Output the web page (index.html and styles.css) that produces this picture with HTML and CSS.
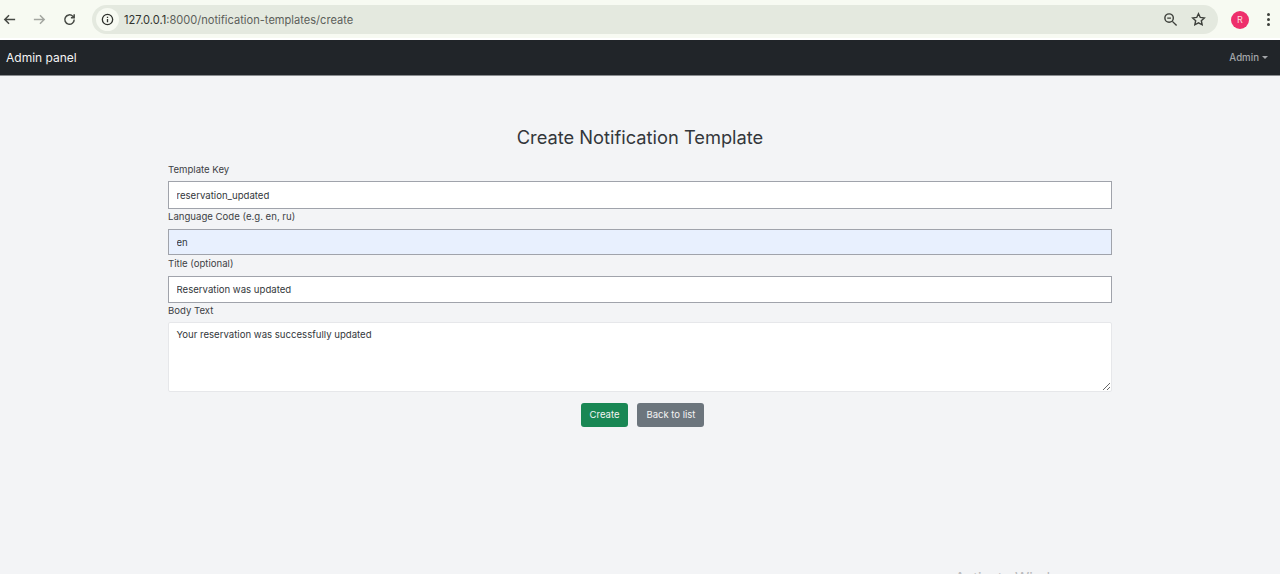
FILE: index.html
```html
<!DOCTYPE html>
<html lang="en">
<head>
    <meta charset="UTF-8">
    <meta name="viewport" content="width=device-width, initial-scale=1.0">
    <title>Create Notification Template</title>
    <link rel="stylesheet" href="styles.css">
</head>
<body>

    <div class="browser-bar">
        <svg class="nav-icon" viewBox="0 0 16 16"><path d="M14 8H3M7.5 3.500 3 8l4.500 4.500"/></svg>
        <svg class="nav-icon nav-icon-off" viewBox="0 0 16 16"><path d="M2 8h11M8.500 3.500 13 8l-4.500 4.500"/></svg>
        <svg class="nav-icon" viewBox="0 0 16 16"><path d="M13 8a5 5 0 1 1-1.500-3.500L13 6M13 2.500V6H9.500"/></svg>
        <div class="address-bar">
            <span class="site-info">
                <svg viewBox="0 0 16 16"><circle cx="8" cy="8" r="5.500"/><path d="M8 7.500v3.500M8 5v1.300"/></svg>
            </span>
            <span class="url">127.0.0.1<span class="url-rest">:8000/notification-templates/create</span></span>
            <svg class="bar-icon" viewBox="0 0 16 16"><circle cx="6.500" cy="6.500" r="4.500"/><path d="M10 10l4.500 4.500M4.500 6.500h4"/></svg>
            <svg class="bar-icon" viewBox="0 0 16 16"><path d="M8 1.800l1.900 4 4.300.5-3.200 3 .9 4.300L8 11.500l-3.900 2.100.9-4.300-3.200-3 4.300-.5z"/></svg>
        </div>
        <span class="avatar">R</span>
        <span class="kebab"><i></i><i></i><i></i></span>
    </div>

    <nav class="navbar">
        <a class="brand" href="#">Admin panel</a>
        <a class="user-menu" href="#">Admin</a>
    </nav>

    <main class="container">
        <h1>Create Notification Template</h1>
        <form>
            <label for="key">Template Key</label>
            <input type="text" id="key" class="field" value="reservation_updated">

            <label for="lang">Language Code (e.g. en, ru)</label>
            <input type="text" id="lang" class="field field-autofill" value="en">

            <label for="title">Title (optional)</label>
            <input type="text" id="title" class="field field-short" value="Reservation was updated">

            <label for="body">Body Text</label>
            <textarea id="body" class="field field-area">Your reservation was successfully updated</textarea>

            <div class="actions">
                <button type="button" class="btn btn-green">Create</button>
                <a href="#" class="btn btn-gray">Back to list</a>
            </div>
        </form>
    </main>

    <div class="watermark">Activate Windows</div>

</body>
</html>
```

FILE: styles.css
```css
* {
    box-sizing: border-box;
}
html, body {
    height: 574px;
    overflow: hidden;
}
body {
    margin: 0;
    position: relative;
    font-family: Inter, "Open Sans", sans-serif;
    background-color: #f3f4f6;
    color: #212529;
}

/* browser chrome */
.browser-bar {
    height: 40px;
    display: flex;
    align-items: center;
    padding: 1px 7px 0 2px;
    background-color: #f7faf2;
    border-bottom: 2px solid #fff;
}
.nav-icon {
    width: 15px;
    height: 15px;
    margin-right: 15px;
    fill: none;
    stroke: #474a45;
    stroke-width: 1.600;
}
.nav-icon-off {
    stroke: #a3a6a0;
}
.address-bar {
    width: 1126px;
    height: 29px;
    display: flex;
    align-items: center;
    padding: 0 12px 0 4px;
    border-radius: 15px;
    background-color: #e4e9df;
}
.site-info {
    width: 23px;
    height: 23px;
    display: flex;
    align-items: center;
    justify-content: center;
    border-radius: 50%;
    background-color: #f7faf2;
}
.site-info svg {
    width: 15px;
    height: 15px;
    fill: none;
    stroke: #30332e;
    stroke-width: 1.400;
}
.url {
    flex: 1;
    margin-left: 5px;
    font-size: 11.100px;
    color: #30332e;
}
.url-rest {
    color: #5c5f5a;
}
.bar-icon {
    width: 15px;
    height: 15px;
    margin-left: 13px;
    fill: none;
    stroke: #3d403b;
    stroke-width: 1.500;
}
.avatar {
    width: 18px;
    height: 18px;
    margin-left: 13px;
    display: flex;
    align-items: center;
    justify-content: center;
    border-radius: 50%;
    background-color: #ee2f6c;
    color: #fdd;
    font-size: 9px;
}
.kebab {
    margin-left: 18px;
    display: flex;
    flex-direction: column;
    gap: 2px;
}
.kebab i {
    width: 3px;
    height: 3px;
    border-radius: 50%;
    background-color: #3d403b;
}

/* navbar */
.navbar {
    height: 35px;
    display: flex;
    align-items: center;
    justify-content: space-between;
    padding: 0 12px 0 6px;
    background-color: #212529;
    box-shadow: 0 1px 0 #8a8d90;
}
.brand {
    color: #f4f4f4;
    font-size: 12px;
    text-decoration: none;
}
.user-menu {
    padding-bottom: 1px;
    color: #a3a6a9;
    font-size: 9.700px;
    font-weight: 500;
    text-decoration: none;
}
.user-menu::after {
    content: "";
    display: inline-block;
    margin-left: 3px;
    vertical-align: 2px;
    border-top: 3px solid;
    border-left: 3px solid transparent;
    border-right: 3px solid transparent;
}

/* form */
.container {
    width: 944px;
    margin: 0 auto;
}
h1 {
    margin: 50px 0 0;
    height: 38px;
    font-size: 18.300px;
    font-weight: 400;
    line-height: 24px;
    text-align: center;
    color: #33373b;
}
label {
    display: block;
    height: 13px;
    line-height: 13px;
    margin-bottom: 6px;
    font-size: 9.600px;
    color: #3d4145;
}
label[for="key"] {
    margin-bottom: 5px;
}
.field {
    display: block;
    width: 100%;
    height: 28px;
    margin-bottom: 1px;
    padding: 0 7.500px;
    font-family: inherit;
    font-size: 9.600px;
    color: #33373b;
    background-color: #fff;
    border: 1px solid #a0a3ab;
    border-radius: 0;
    outline: none;
}
.field-autofill {
    height: 26px;
    margin-bottom: 2px;
    background-color: #e8f0fe;
}
.field-short {
    height: 27px;
}
.field-area {
    height: 70px;
    margin-top: -1px;
    padding: 6px 7.500px;
    border-color: #e6e7ea;
    border-radius: 2px;
}
.actions {
    display: flex;
    justify-content: center;
    gap: 9px;
    margin-top: 11px;
    padding-left: 5px;
}
.btn {
    height: 24px;
    display: flex;
    align-items: center;
    padding: 0 9px 1px;
    border: none;
    border-radius: 3px;
    color: #f4f4f4;
    font-family: inherit;
    font-size: 9.500px;
    font-weight: 400;
    text-decoration: none;
}
.btn-green {
    background-color: #198754;
}
.btn-gray {
    background-color: #6c757d;
}

/* windows watermark, only the tops of the letters show */
.watermark {
    position: absolute;
    left: 955px;
    top: 568px;
    font-size: 14.500px;
    line-height: 20px;
    color: #b9babc;
}
```
